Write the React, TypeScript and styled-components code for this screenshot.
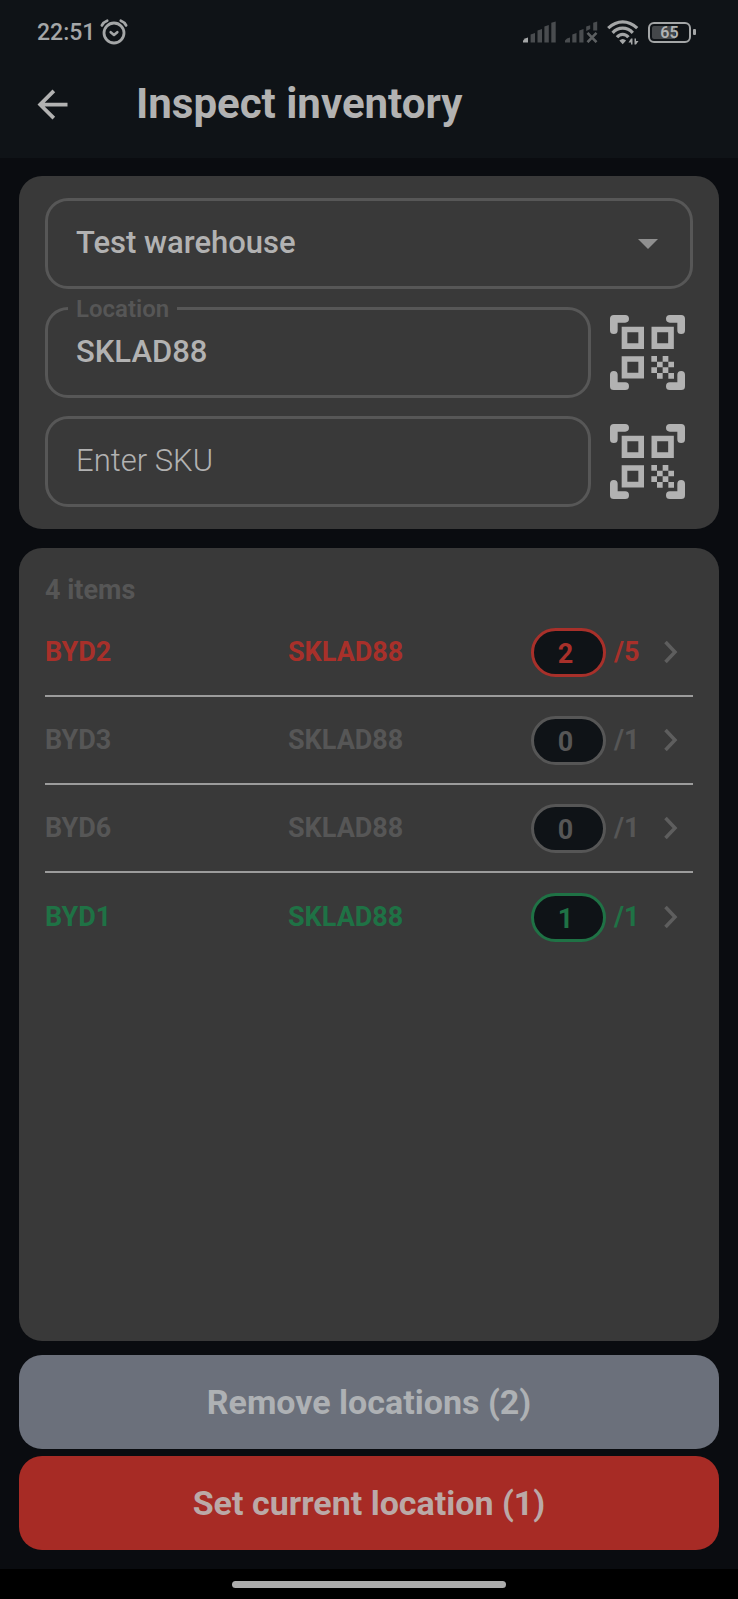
import React, { useState } from "react";
import styled, { createGlobalStyle } from "styled-components";
import { MdArrowBack } from "react-icons/md";

const color = {
  page: "#0a0c10",
  bar: "#0f1317",
  card: "#393939",
  outline: "#575757",
  muted: "#565656",
  text: "#b2b2b2",
  line: "#9c9c9c",
  red: "#a72b25",
  redText: "#a8302a",
  green: "#1f7245",
  slate: "#6b707b",
};

const GlobalStyle = createGlobalStyle`
  * { box-sizing: border-box; }
  body {
    margin: 0;
    background: ${color.page};
    color: ${color.text};
    font-family: Roboto, "Liberation Sans", sans-serif;
  }
  button, input, select { font: inherit; color: inherit; }
`;

const Screen = styled.div`
  display: flex;
  flex-direction: column;
  min-height: 100vh;
`;

const Header = styled.header`
  background: ${color.bar};
`;

const StatusBar = styled.div`
  display: flex;
  align-items: center;
  justify-content: space-between;
  height: 50px;
  padding: 14px 42px 0 37px;
`;

const StatusGroup = styled.div<{ $gap: number }>`
  display: flex;
  align-items: center;
  gap: ${(p) => p.$gap}px;
`;

const Clock = styled.span`
  padding-top: 2px;
  font-size: 23px;
  font-weight: 500;
  line-height: 34px;
  color: #a4a6a7;
`;

const Battery = styled.div`
  display: flex;
  align-items: center;
  gap: 2px;
`;

const BatteryShell = styled.div`
  width: 43px;
  height: 21px;
  border: 2px solid #a4a6a7;
  border-radius: 6px;
  padding: 2px;
`;

const BatteryLevel = styled.div`
  height: 13px;
  border-radius: 2px;
  background: linear-gradient(to right, #44474a 65%, transparent 65%);
  font-size: 16px;
  font-weight: 600;
  line-height: 14px;
  text-align: center;
  color: #b0b2b3;
`;

const BatteryTip = styled.div`
  width: 3px;
  height: 6px;
  border-radius: 1px;
  background: #a4a6a7;
`;

const AppBar = styled.div`
  display: flex;
  align-items: center;
  gap: 61px;
  height: 108px;
  padding: 0 30px;
`;

const IconButton = styled.button`
  display: flex;
  flex: none;
  padding: 0;
  border: 0;
  background: none;
  cursor: pointer;
`;

const Title = styled.h1`
  margin: 0;
  font-size: 42px;
  font-weight: 700;
  line-height: 48px;
`;

const Main = styled.main`
  display: flex;
  flex: 1;
  flex-direction: column;
  padding: 18px 19px 19px;
`;

const Card = styled.section`
  border-radius: 23px;
  padding: 22px 26px;
  background: ${color.card};
`;

const Filters = styled(Card)`
  display: flex;
  flex-direction: column;
  gap: 18px;
  margin-bottom: 19px;
`;

const ItemsCard = styled(Card)`
  flex: 1;
  margin-bottom: 14px;
`;

const FieldRow = styled.div`
  display: flex;
  align-items: center;
  gap: 19px;
  padding-right: 8px;
`;

const Field = styled.div`
  position: relative;
  flex: 1;
`;

const FieldLabel = styled.label`
  position: absolute;
  top: -12px;
  left: 23px;
  padding: 1px 8px 0;
  background: ${color.card};
  color: ${color.muted};
  font-size: 24px;
  font-weight: 600;
  line-height: 26px;
`;

const TextInput = styled.input`
  display: block;
  width: 100%;
  height: 91px;
  padding: 0 28px 2px;
  border: 3px solid ${color.outline};
  border-radius: 23px;
  outline: none;
  background: transparent;
  font-size: 31px;
  font-weight: 500;

  &::placeholder {
    color: ${color.text};
    font-weight: 300;
    opacity: 1;
  }
`;

const WarehouseSelect = styled.select`
  display: block;
  width: 100%;
  height: 91px;
  padding: 0 28px 2px;
  border: 3px solid ${color.outline};
  border-radius: 23px;
  outline: none;
  appearance: none;
  background: transparent;
  font-size: 31px;
  font-weight: 500;
`;

const SelectArrow = styled.span`
  position: absolute;
  top: 41px;
  right: 35px;
  border: 10px solid transparent;
  border-top-color: #8f8f8f;
  border-bottom-width: 0;
  pointer-events: none;
`;

const ItemTable = styled.table`
  width: 100%;
  border-spacing: 0;
  table-layout: fixed;
  font-size: 27px;
  font-weight: 700;
`;

const Caption = styled.caption`
  padding-top: 2px;
  color: ${color.muted};
  line-height: 37px;
  text-align: left;
`;

const ItemRow = styled.tr<{ $tone: string }>`
  color: ${(p) => p.$tone};

  &:not(:last-child) > td {
    border-bottom: 2px solid ${color.line};
  }
`;

const Cell = styled.td<{ $share: number }>`
  width: ${(p) => p.$share}%;
  height: 88px;
  padding: 0;
`;

const CountGroup = styled.div`
  display: flex;
  align-items: center;
`;

const CountInput = styled.input`
  width: 75px;
  height: 49px;
  margin-right: 8px;
  padding: 3px 6px 0 0;
  border: 3px solid currentColor;
  border-radius: 25px;
  outline: none;
  background: ${color.bar};
  text-align: center;
`;

const ChevronButton = styled(IconButton)`
  margin-left: auto;
  padding-right: 15px;
  color: #5e5e5e;
`;

const Actions = styled.div`
  display: flex;
  flex-direction: column;
  gap: 7px;
`;

const ActionButton = styled.button<{ $fill: string; $ink: string }>`
  height: 94px;
  border: 0;
  border-radius: 23px;
  background: ${(p) => p.$fill};
  color: ${(p) => p.$ink};
  font-size: 34px;
  font-weight: 700;
  cursor: pointer;
`;

const NavBar = styled.footer`
  display: flex;
  justify-content: center;
  height: 30px;
  padding-top: 12px;
  background: #000;
`;

const HomeIndicator = styled.div`
  width: 37%;
  height: 7px;
  border-radius: 4px;
  background: #acacac;
`;

const AlarmIcon = () => (
  <svg width="28" height="28" viewBox="0 0 28 28" fill="none" stroke="#a4a6a7" strokeLinecap="round" aria-hidden="true">
    <circle cx="14" cy="15" r="10" strokeWidth="2.8" />
    <path d="M10.700 14.200l3.300 2.800 3.300-2.800" strokeWidth="2.600" strokeLinejoin="round" />
    <path d="M1.900 7.400Q3.500 4.200 7.200 2.800M26.100 7.400Q24.500 4.200 20.800 2.800" strokeWidth="2.800" />
  </svg>
);

const SignalIcon = () => (
  <svg width="33" height="22" viewBox="0 0 33 22" fill="#494c4f" aria-hidden="true">
    <path d="M0 21.500V19.500Q1.500 17 5 16.500V21.500z" fill="#a4a6a7" />
    <path d="M7.600 13.500L12 12v9.500H7.600zM14.500 9.600L19 8v13.500h-4.500zM21.400 5.600L25.800 4v17.500h-4.400zM28.300 1.800L32.700 0.500v21h-4.400z" />
  </svg>
);

const NoSignalIcon = () => (
  <svg width="33" height="22" viewBox="0 0 33 22" fill="#494c4f" aria-hidden="true">
    <path d="M0 21.500v-2Q1.500 17 5 16.500v5zM7.300 13.500L11.500 12v9.500H7.300zM14.300 9.600L18.500 8v13.500h-4.200zM21.200 5.600L25.200 4.200V8l-4 2zM28.200 1.800L32.200 0.500v9h-4z" />
    <path d="M22.500 11.800l9 9.400M31.500 11.800l-9 9.400" stroke="#5d6062" strokeWidth="2.600" />
  </svg>
);

const WifiIcon = () => (
  <svg width="32" height="25" viewBox="0 0 32 25" fill="none" stroke="#a4a6a7" strokeWidth="3.200" aria-hidden="true">
    <path d="M1.200 8.200Q8 1.900 15.700 1.900T30.200 8.200" />
    <path d="M5.600 12.800Q10 8.200 15.700 8.200T25.800 12.800" />
    <path d="M10 17.200Q12.300 14.300 15.700 14.300T21.400 17.200" />
    <path d="M12.300 20.500q3.400-3 6.800 0l-3.400 3.800z" fill="#a4a6a7" stroke="none" />
    <path d="M25.500 18.500h-1.500l-2.500 4h2.500v2h1.500zM27.500 24.500h1.500l2.500-3.500h-2.500v-2.500h-1.500z" fill="#a4a6a7" stroke="none" />
  </svg>
);

const QrScanIcon = () => (
  <svg width="75" height="75" viewBox="0 0 225 225" fill="none" stroke={color.text} aria-hidden="true">
    <g strokeWidth="23" strokeLinecap="round" strokeLinejoin="round">
      <path d="M11.500 45.500V11.500H45.500M179.500 11.500H213.500V45.500M213.500 179.500V213.500H179.500M45.500 213.500H11.500V179.500" />
    </g>
    <g strokeWidth="17">
      <path d="M43.500 43.500h50v50h-50zM133 43.500h50v50h-50zM43.500 132h50v50h-50z" />
    </g>
    <path
      fill={color.text}
      stroke="none"
      fillRule="evenodd"
      d="M124 123h17v17h17v-17h17v17h17v17h-17v17h17v17h-17v-17h-17v17h-17v-17h-17v-17h17v-17h-17zM158 140v17h17v-17zM141 157v17h17v-17z"
    />
  </svg>
);

const ChevronIcon = () => (
  <svg width="15" height="24" viewBox="0 0 15 24" fill="none" stroke="currentColor" strokeWidth="3.500" aria-hidden="true">
    <path d="M2.500 2l9.500 10-9.500 10" />
  </svg>
);

const items = [
  { sku: "BYD2", location: "SKLAD88", counted: "2", expected: 5, tone: color.redText },
  { sku: "BYD3", location: "SKLAD88", counted: "0", expected: 1, tone: color.muted },
  { sku: "BYD6", location: "SKLAD88", counted: "0", expected: 1, tone: color.muted },
  { sku: "BYD1", location: "SKLAD88", counted: "1", expected: 1, tone: color.green },
];

export default function App() {
  const [location, setLocation] = useState("SKLAD88");
  const [sku, setSku] = useState("");

  return (
    <Screen>
      <GlobalStyle />
      <Header>
        <StatusBar>
          <StatusGroup $gap={5}>
            <Clock>22:51</Clock>
            <AlarmIcon />
          </StatusGroup>
          <StatusGroup $gap={9}>
            <SignalIcon />
            <NoSignalIcon />
            <WifiIcon />
            <Battery>
              <BatteryShell>
                <BatteryLevel>65</BatteryLevel>
              </BatteryShell>
              <BatteryTip />
            </Battery>
          </StatusGroup>
        </StatusBar>
        <AppBar>
          <IconButton type="button" aria-label="Back">
            <MdArrowBack size={45} />
          </IconButton>
          <Title>Inspect inventory</Title>
        </AppBar>
      </Header>

      <Main>
        <Filters>
          <Field>
            <WarehouseSelect aria-label="Warehouse" defaultValue="test">
              <option value="test">Test warehouse</option>
            </WarehouseSelect>
            <SelectArrow />
          </Field>
          <FieldRow>
            <Field>
              <TextInput id="location" value={location} onChange={(e) => setLocation(e.target.value)} />
              <FieldLabel htmlFor="location">Location</FieldLabel>
            </Field>
            <IconButton type="button" aria-label="Scan location">
              <QrScanIcon />
            </IconButton>
          </FieldRow>
          <FieldRow>
            <Field>
              <TextInput
                aria-label="SKU"
                placeholder="Enter SKU"
                value={sku}
                onChange={(e) => setSku(e.target.value)}
              />
            </Field>
            <IconButton type="button" aria-label="Scan SKU">
              <QrScanIcon />
            </IconButton>
          </FieldRow>
        </Filters>

        <ItemsCard>
          <ItemTable>
            <Caption>{items.length} items</Caption>
            <tbody>
              {items.map((item) => (
                <ItemRow key={item.sku} $tone={item.tone}>
                  <Cell $share={37.5}>{item.sku}</Cell>
                  <Cell $share={37.5}>{item.location}</Cell>
                  <Cell $share={25}>
                    <CountGroup>
                      <CountInput aria-label={`${item.sku} counted`} inputMode="numeric" defaultValue={item.counted} />
                      <span>/{item.expected}</span>
                      <ChevronButton type="button" aria-label={`Open ${item.sku}`}>
                        <ChevronIcon />
                      </ChevronButton>
                    </CountGroup>
                  </Cell>
                </ItemRow>
              ))}
            </tbody>
          </ItemTable>
        </ItemsCard>

        <Actions>
          <ActionButton type="button" $fill={color.slate} $ink="#aeb1b4">
            Remove locations (2)
          </ActionButton>
          <ActionButton type="button" $fill={color.red} $ink="#bba9a7">
            Set current location (1)
          </ActionButton>
        </Actions>
      </Main>

      <NavBar>
        <HomeIndicator />
      </NavBar>
    </Screen>
  );
}
